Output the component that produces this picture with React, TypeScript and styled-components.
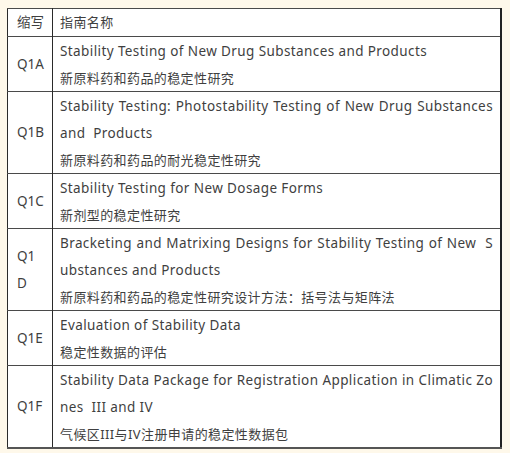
import React from 'react';
import styled, { createGlobalStyle } from 'styled-components';

const GlobalStyle = createGlobalStyle`
  html, body {
    margin: 0;
    padding: 0;
    background: #fef8ea;
  }
  body {
    font-family: "Noto Sans", "Noto Sans CJK SC", sans-serif;
  }
`;

interface Guideline {
  // code split into the lines it wraps to in the narrow column
  code: string[];
  en: string;
  zh: string;
}

const guidelines: Guideline[] = [
  {
    code: ['Q1A'],
    en: 'Stability Testing of New Drug Substances and Products',
    zh: '新原料药和药品的稳定性研究',
  },
  {
    code: ['Q1B'],
    en: 'Stability Testing: Photostability Testing of New Drug Substances and\u00a0 Products',
    zh: '新原料药和药品的耐光稳定性研究',
  },
  {
    code: ['Q1C'],
    en: 'Stability Testing for New Dosage Forms',
    zh: '新剂型的稳定性研究',
  },
  {
    code: ['Q1', 'D'],
    en: 'Bracketing and Matrixing Designs for Stability Testing of New\u00a0 Substances and Products',
    zh: '新原料药和药品的稳定性研究设计方法：括号法与矩阵法',
  },
  {
    code: ['Q1E'],
    en: 'Evaluation of Stability Data',
    zh: '稳定性数据的评估',
  },
  {
    code: ['Q1F'],
    en: 'Stability Data Package for Registration Application in Climatic Zones\u00a0 III and IV',
    zh: '气候区III与IV注册申请的稳定性数据包',
  },
];

const Page = styled.div`
  padding: 8px 8px 7px 7px;
`;

const Table = styled.table`
  width: 495px;
  border-collapse: collapse;
  background: #ffffff;
  border: 1px solid #2a2a2a;
  border-right: 2px solid #222222;
  border-bottom: 2px solid #555555;
  table-layout: fixed;
  color: #3f3f3f;
  font-size: 13px;
  line-height: 27px;
  letter-spacing: 0.4px;
`;

const Row = styled.tr`
  border-top: 1px solid #4a4a4a;
`;

const CodeCell = styled.td`
  width: 28px;
  padding: 0 7px 0 9px;
  border-right: 1px solid #2a2a2a;
  vertical-align: middle;
  white-space: nowrap;
  font-size: 13.5px;
  letter-spacing: 0;
`;

const NameCell = styled.td`
  padding: 0 7px;
  vertical-align: top;
  text-align: justify;
  word-break: break-all;
`;

const EnLine = styled.div`
  font-size: 13.5px;
  padding-top: 1px;
  margin-bottom: -1px;
`;

const ZhLine = styled.div`
  padding-top: 1px;
  margin-bottom: -1px;
`;

export default function App() {
  return (
    <>
      <GlobalStyle />
      <Page>
        <Table>
          <tbody>
            <Row>
              <CodeCell>缩写</CodeCell>
              <NameCell>指南名称</NameCell>
            </Row>
            {guidelines.map((g) => (
              <Row key={g.code.join('')}>
                <CodeCell>
                  {g.code.map((part, i) => (
                    <React.Fragment key={part}>
                      {i > 0 && <br />}
                      {part}
                    </React.Fragment>
                  ))}
                </CodeCell>
                <NameCell>
                  <EnLine>{g.en}</EnLine>
                  <ZhLine>{g.zh}</ZhLine>
                </NameCell>
              </Row>
            ))}
          </tbody>
        </Table>
      </Page>
    </>
  );
}
